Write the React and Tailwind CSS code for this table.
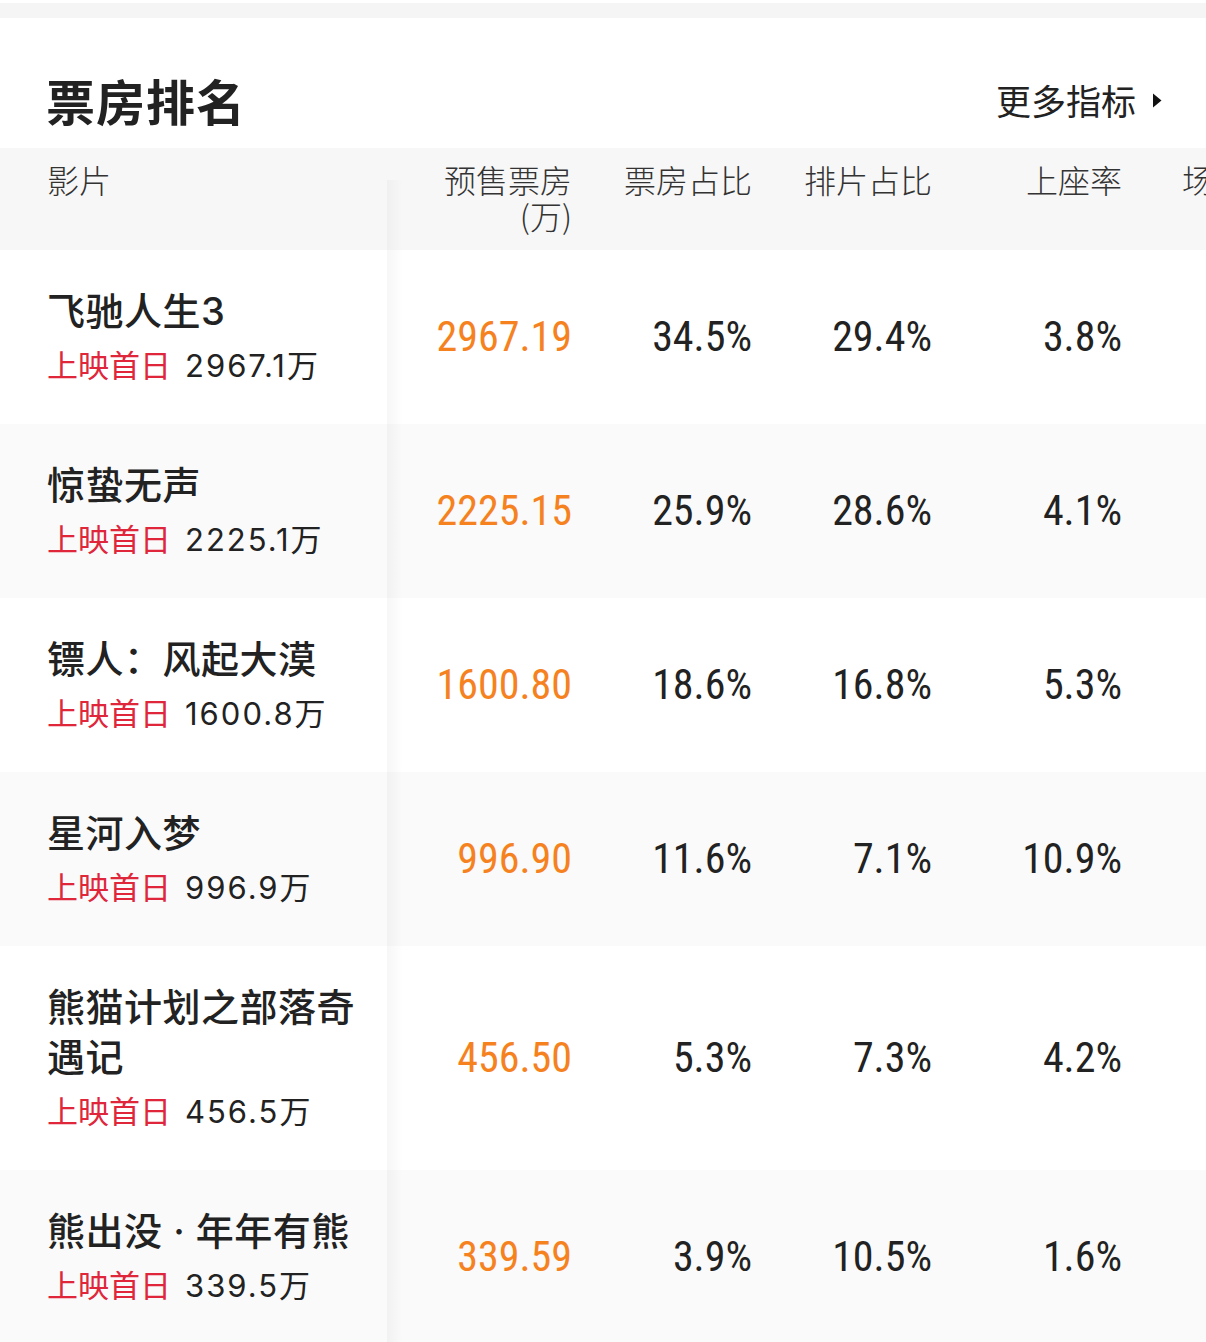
import React from 'react';

const movies = [
  { name: '飞驰人生3', first: '2967.1万', presale: '2967.19', boxShare: '34.5%', showShare: '29.4%', seat: '3.8%' },
  { name: '惊蛰无声', first: '2225.1万', presale: '2225.15', boxShare: '25.9%', showShare: '28.6%', seat: '4.1%' },
  { name: '镖人：风起大漠', first: '1600.8万', presale: '1600.80', boxShare: '18.6%', showShare: '16.8%', seat: '5.3%' },
  { name: '星河入梦', first: '996.9万', presale: '996.90', boxShare: '11.6%', showShare: '7.1%', seat: '10.9%' },
  { name: '熊猫计划之部落奇遇记', first: '456.5万', presale: '456.50', boxShare: '5.3%', showShare: '7.3%', seat: '4.2%' },
  { name: '熊出没 · 年年有熊', first: '339.5万', presale: '339.59', boxShare: '3.9%', showShare: '10.5%', seat: '1.6%' },
];

const cjk = "font-['Noto_Sans_CJK_SC','Noto_Sans',sans-serif]";
const latin = "font-['Inter','Noto_Sans_CJK_SC',sans-serif]";
const num = "font-['Liberation_Sans_Narrow','Roboto_Condensed','Noto_Sans_CJK_SC',sans-serif]";

// soft shadow on the right edge of the pinned film column
const PinShadow = () => (
  <div className="pointer-events-none absolute top-0 bottom-0 right-[-16px] w-4 bg-gradient-to-r from-black/[0.035] to-transparent" />
);

const MovieRow = ({ movie, index }) => {
  const bg = index % 2 === 1 ? 'bg-[#fafafa]' : 'bg-white';
  return (
    <div className={`flex items-center ${bg}`}>
      <div className={`${latin} relative w-[387px] shrink-0 self-stretch flex flex-col justify-center pl-[47px] pr-5 py-9 ${bg}`}>
        <div className="text-[38px] leading-[50px] font-medium text-[#222] tracking-[0.5px]">{movie.name}</div>
        <div className="mt-2 text-[31px] leading-[44px] whitespace-nowrap">
          <span className="text-[#e0263b]">上映首日</span>
          <span className="ml-[14px] text-[#222] tracking-[2px]">{movie.first}</span>
        </div>
        <PinShadow />
      </div>
      <div className={`${num} flex items-center text-[42px] leading-none`}>
        <div className="w-[185px] text-right text-[#f5821f]">{movie.presale}</div>
        <div className="w-[180px] text-right text-[#222]">{movie.boxShare}</div>
        <div className="w-[180px] text-right text-[#222]">{movie.showShare}</div>
        <div className="w-[190px] text-right text-[#222]">{movie.seat}</div>
      </div>
    </div>
  );
};

export default function App() {
  return (
    <div className={`${cjk} w-[1206px] h-[1342px] overflow-hidden bg-white`}>
      <div className="h-[3px] bg-white" />
      <div className="h-[15px] bg-[#f5f5f5]" />

      <div className="flex items-center justify-between pl-[46px] pr-[44px] pt-[57px] pb-[23px]">
        <h1 className="text-[49px] leading-[50px] font-bold text-[#222] tracking-[1px]">票房排名</h1>
        <div className="flex items-center text-[35px] leading-[50px] text-[#222]">
          更多指标
          <svg className="ml-4 w-[10px] h-[15px]" viewBox="0 0 10 15">
            <path d="M1 0.5 L9.5 7.5 L1 14.5 Z" fill="#111" />
          </svg>
        </div>
      </div>

      <div className="flex items-start h-[102px] bg-[#f7f7f7] text-[32px] leading-[36px] text-[#333] font-light">
        <div className="relative w-[387px] shrink-0 self-stretch pl-[47px] pt-[13px] bg-[#f7f7f7]">
          影片
          <div className="pointer-events-none absolute top-[32px] bottom-0 right-[-16px] w-4 bg-gradient-to-r from-black/[0.03] to-transparent" />
        </div>
        <div className="flex pt-[13px] whitespace-nowrap">
          <div className="w-[185px] text-right">预售票房<br />(万)</div>
          <div className="w-[180px] text-right">票房占比</div>
          <div className="w-[180px] text-right">排片占比</div>
          <div className="w-[190px] text-right">上座率</div>
          <div className="pl-[60px]">场次占比</div>
        </div>
      </div>

      {movies.map((m, i) => (
        <MovieRow key={m.name} movie={m} index={i} />
      ))}
    </div>
  );
}
